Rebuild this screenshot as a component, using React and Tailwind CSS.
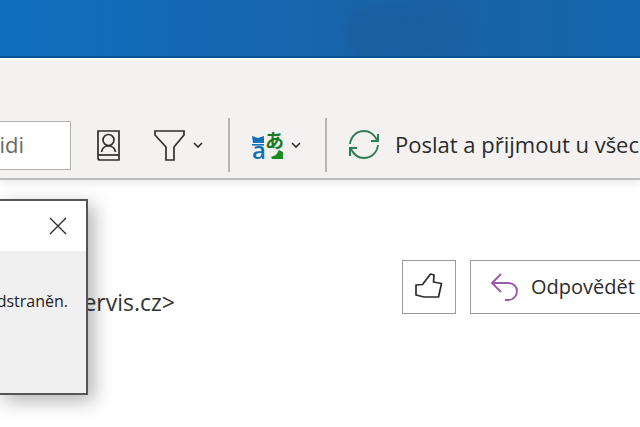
import React from 'react';

const font = 'font-["Open_Sans","Noto_Sans",sans-serif]';

function Chevron() {
  return (
    <svg width="10" height="6" viewBox="0 0 10 6" fill="none" stroke="#2b2b2b" strokeWidth="1.6">
      <path d="M1 1l4 4 4-4" />
    </svg>
  );
}

function Separator() {
  return <div className="w-[2px] h-[54px] bg-[#b4b4b4] shrink-0" />;
}

function TranslateIcon() {
  return (
    <div className="relative w-[32px] h-[30px] shrink-0">
      <svg className="absolute left-0 top-0" width="32" height="30" viewBox="0 0 32 30">
        <path d="M0 6l6 2 6-2v7H1z" fill="#1170b8" />
        <path d="M0 14h12v1.600H0z" fill="#1170b8" />
        <path d="M19 27l5-2 3-5 4 2v7H20z" fill="#1b8a1f" />
      </svg>
      <span className='absolute left-[0px] top-[9px] text-[24px] leading-[22px] font-semibold text-[#1170b8] font-["Open_Sans",sans-serif]'>a</span>
      <span className='absolute left-[13px] top-[-1px] text-[19px] leading-[22px] font-bold text-[#1b7a1f] font-["Noto_Sans_CJK_JP",sans-serif]'>あ</span>
    </div>
  );
}

export default function App() {
  return (
    <div className={`relative w-[640px] h-[427px] overflow-hidden bg-white ${font}`}>
      {/* title bar */}
      <div className="relative h-[58px] overflow-hidden border-b-2 border-[#0b4f93] bg-gradient-to-r from-[#0f6ebf] via-[#1a62a6] via-70% to-[#1166ae]">
        <div className="absolute left-[344px] top-[6px] w-[120px] h-[54px] rounded-full bg-[#1a5f9f] blur-[8px]" />
      </div>

      {/* toolbar */}
      <div className="h-[120px] mt-[2px] bg-[#f3f2f1] border-b-2 border-[#bdbdbd] shadow-[0_4px_8px_rgba(0,0,0,0.08)] flex items-end pb-[6px] overflow-hidden">
        <div className="flex items-center h-[54px] whitespace-nowrap">
          <div className="w-[71px] h-[49px] bg-white border border-[#b0b0b0] border-l-0 flex items-center justify-end pr-[46px] pb-[2px] text-[22px] text-[#6a6a6a] shrink-0">
            Hledat lidi
          </div>
          <svg className="ml-[26px] shrink-0" width="23" height="31" viewBox="0 0 23 31" fill="none" stroke="#2f2f2f" strokeWidth="1.7">
            <path d="M1 1h21v29H3a2 2 0 0 1-2-2z" />
            <path d="M1 25h21" />
            <circle cx="11.5" cy="10" r="5.500" />
            <path d="M4.500 22c.7-4 3.300-6 7-6s6.300 2 7 6" />
          </svg>
          <svg className="ml-[34px] shrink-0" width="31" height="31" viewBox="0 0 31 31" fill="none" stroke="#2f2f2f" strokeWidth="1.7">
            <path d="M1 1h29v4L20 17v13h-8V17L1 5z" />
          </svg>
          <div className="ml-[8px] shrink-0 flex"><Chevron /></div>
          <div className="ml-[25px]"><Separator /></div>
          <div className="ml-[22px]"><TranslateIcon /></div>
          <div className="ml-[7px] shrink-0 flex"><Chevron /></div>
          <div className="ml-[24px]"><Separator /></div>
          <svg className="ml-[21px] shrink-0" width="33" height="30" viewBox="0 0 33 30" fill="none" stroke="#2e7d55" strokeWidth="1.9">
            <path d="M2 14C3 6 9 1 16 1c5 0 10 3 13 9" />
            <path d="M30 4v7h-7" strokeWidth="2" />
            <path d="M30 15c-1 8-7 13-14 13-5 0-10-3-13-9" />
            <path d="M2 26v-8h7" strokeWidth="2" />
          </svg>
          <span className="ml-[14px] mb-[3px] text-[22px] leading-none text-[#2b2b2b]">Poslat a přijmout u všech složek</span>
        </div>
      </div>

      {/* message header */}
      <div className="flex items-start h-[200px] pt-[80px] whitespace-nowrap">
        <div className="w-[175px] shrink-0 flex justify-end overflow-hidden pt-[28px] text-[23px] leading-[28px] text-[#333333]">
          &lt;podpora@servis.cz&gt;
        </div>
        <div className="ml-[227px] w-[54px] h-[54px] shrink-0 border border-[#9a9a9a] flex items-center justify-center">
          <svg className="mb-[3px]" width="28" height="27" viewBox="0 0 28 27" fill="none" stroke="#2b2b2b" strokeWidth="1.7" strokeLinejoin="round">
            <path d="M1 13l6.500-.5L15.500 2l3.500 1-.5 7 8 1.500-3 13.500H9l-8-2z" />
          </svg>
        </div>
        <div className="ml-[14px] h-[54px] w-[200px] shrink-0 border border-[#9a9a9a] flex items-center pl-[19px]">
          <svg className="shrink-0" width="30" height="29" viewBox="0 0 30 29" fill="none" stroke="#9b5aa8" strokeWidth="1.9">
            <path d="M11 1L2 10l9 9" />
            <path d="M2 10h16c6 0 9 4 9 8s-3 9-9 9h-3" />
          </svg>
          <span className="ml-[11px] text-[20px] leading-none text-[#2b2b2b]">Odpovědět</span>
        </div>
      </div>

      {/* dialog over the content */}
      <div className="absolute left-[-2px] top-[199px] w-[90px] h-[196px] flex flex-col border-2 border-[#555555] bg-[#f0f0f0] shadow-[6px_6px_18px_rgba(0,0,0,0.3)] overflow-hidden">
        <div className="h-[50px] shrink-0 bg-white flex items-center justify-end pr-[19px]">
          <svg width="18" height="18" viewBox="0 0 18 18" stroke="#2b2b2b" strokeWidth="1.3">
            <path d="M1 1l16 16M17 1L1 17" />
          </svg>
        </div>
        <div className="flex justify-end pr-[18px] pt-[40px] text-[16px] leading-[20px] text-[#222222] whitespace-nowrap">
          odstraněn.
        </div>
      </div>
    </div>
  );
}
